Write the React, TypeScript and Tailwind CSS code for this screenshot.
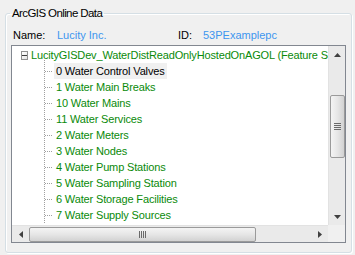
import React from "react";

const items = [
  "0 Water Control Valves",
  "1 Water Main Breaks",
  "10 Water Mains",
  "11 Water Services",
  "2 Water Meters",
  "3 Water Nodes",
  "4 Water Pump Stations",
  "5 Water Sampling Station",
  "6 Water Storage Facilities",
  "7 Water Supply Sources",
];

const font = { fontFamily: '"Liberation Sans", Arial, sans-serif' };

function VDots({ className }: { className: string }) {
  return (
    <div
      className={`w-px bg-[repeating-linear-gradient(to_bottom,#a0a0a0_0px,#a0a0a0_1px,transparent_1px,transparent_2px)] ${className}`}
    />
  );
}

function HDots({ className }: { className: string }) {
  return (
    <div
      className={`h-px bg-[repeating-linear-gradient(to_right,#a0a0a0_0px,#a0a0a0_1px,transparent_1px,transparent_2px)] ${className}`}
    />
  );
}

export default function App() {
  return (
    <div
      className="w-[355px] h-[255px] bg-[#f0f0f0] pt-[5px] pl-[5px] overflow-hidden text-[11px] leading-[16px] text-black"
      style={font}
    >
      <fieldset className="w-[346px] h-[248px] border border-[#d5dfe5] rounded-[3px] shadow-[inset_1px_1px_0_#ffffff,1px_1px_0_#ffffff] px-[5px]">
        <legend className="-ml-[1px] px-[2px] leading-[16px] text-[11.5px] tracking-[-0.6px]">ArcGIS Online Data</legend>
        <div className="flex items-center h-[16px] mt-[6px] pl-[2px]">
          <span className="w-[44px]">Name:</span>
          <span className="w-[121px] text-[#3d96ef]">Lucity Inc.</span>
          <span className="w-[25px]">ID:</span>
          <span className="text-[#3d96ef]">53PExamplepc</span>
        </div>
        <div className="mt-[2px] w-[335px] h-[198px] border border-[#828790] bg-white flex flex-col">
          <div className="flex h-[179px]">
            <div className="w-[316px] h-[179px] relative overflow-hidden pt-[1px] whitespace-nowrap tracking-[-0.15px]">
              {/* root row */}
              <div className="flex items-center h-[16px]">
                <div className="w-[9px] h-[9px] ml-[9px] border border-[#919191] bg-[linear-gradient(135deg,#ffffff,#e4e4e4)] flex items-center justify-center">
                  <div className="w-[5px] h-px bg-[#3c3c3c]" />
                </div>
                <HDots className="w-[5px] ml-[1px]" />
                <span className="ml-[2px] text-[#0a8a0a]">
                  LucityGISDev_WaterDistReadOnlyHostedOnAGOL (Feature Service)
                </span>
              </div>
              {/* children */}
              <div className="flex">
                <div className="w-[13px] flex">
                  <VDots className="ml-[13px] h-[163px]" />
                </div>
                <div className="flex">
                  <VDots className="ml-[19px] h-[163px] -mt-[3px]" />
                  <div className="flex flex-col">
                    {items.map((t, i) => (
                      <div key={t} className="flex items-center h-[16px]">
                        <HDots className="w-[8px]" />
                        <span
                          className={`ml-[1px] px-[2px] ${
                            i === 0 ? "bg-[#f0f0f0] text-black" : "text-[#0a8a0a]"
                          }`}
                        >
                          {t}
                        </span>
                      </div>
                    ))}
                  </div>
                </div>
              </div>
            </div>
            {/* vertical scrollbar */}
            <div className="w-[17px] h-[179px] bg-[#eaeaea] border-l border-[#e2e2e2] flex flex-col items-center">
              <div className="h-[17px] w-full flex items-center justify-center">
                <svg width="7" height="4" viewBox="0 0 7 4">
                  <path d="M3.5 0 L7 4 L0 4 Z" fill="#404040" />
                </svg>
              </div>
              <div className="mt-[32px] w-[15px] h-[63px] rounded-[2px] border border-[#9a9a9a] bg-[linear-gradient(to_right,#f4f4f4,#e6e6e6_50%,#d2d2d2)] flex flex-col items-center justify-center gap-[1px]">
                <div className="w-[7px] h-px bg-[#6a6a6a]" />
                <div className="w-[7px] h-px bg-[#6a6a6a]" />
                <div className="w-[7px] h-px bg-[#6a6a6a]" />
                <div className="w-[7px] h-px bg-[#6a6a6a]" />
              </div>
              <div className="flex-1" />
              <div className="h-[17px] w-full flex items-center justify-center">
                <svg width="7" height="4" viewBox="0 0 7 4">
                  <path d="M0 0 L7 0 L3.5 4 Z" fill="#404040" />
                </svg>
              </div>
            </div>
          </div>
          {/* horizontal scrollbar */}
          <div className="flex h-[17px]">
            <div className="w-[316px] h-[17px] bg-[#eaeaea] border-t border-[#e2e2e2] flex items-center">
              <div className="w-[17px] h-full flex items-center justify-center">
                <svg width="4" height="7" viewBox="0 0 4 7">
                  <path d="M0 3.5 L4 0 L4 7 Z" fill="#404040" />
                </svg>
              </div>
              <div className="w-[227px] h-[15px] rounded-[2px] border border-[#9a9a9a] bg-[linear-gradient(to_bottom,#f4f4f4,#e6e6e6_50%,#d2d2d2)] flex items-center justify-center gap-[1px]">
                <div className="h-[7px] w-px bg-[#6a6a6a]" />
                <div className="h-[7px] w-px bg-[#6a6a6a]" />
                <div className="h-[7px] w-px bg-[#6a6a6a]" />
                <div className="h-[7px] w-px bg-[#6a6a6a]" />
              </div>
              <div className="flex-1" />
              <div className="w-[17px] h-full flex items-center justify-center">
                <svg width="4" height="7" viewBox="0 0 4 7">
                  <path d="M4 3.5 L0 0 L0 7 Z" fill="#404040" />
                </svg>
              </div>
            </div>
            <div className="w-[17px] h-[17px] bg-[#f0f0f0]" />
          </div>
        </div>
      </fieldset>
    </div>
  );
}
